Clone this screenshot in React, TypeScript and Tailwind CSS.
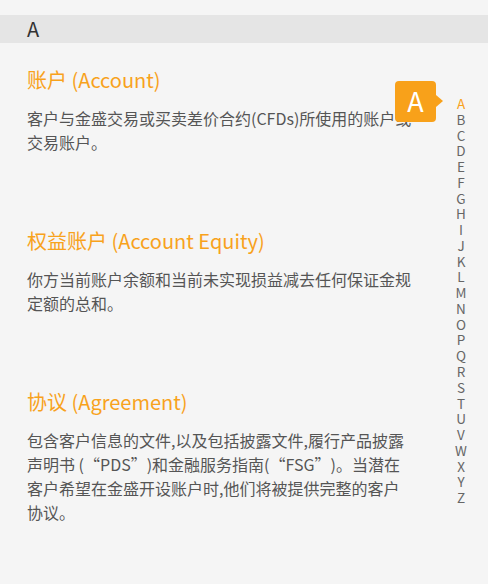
import React from 'react';

const letters = 'ABCDEFGHIJKLMNOPQRSTUVWXYZ'.split('');

// full-width style quotes, as the CJK font draws them in the original
const Open = () => <span className="inline-block w-[1em] text-right">“</span>;
const Close = () => <span className="inline-block w-[1em] text-left">”</span>;

const terms: { title: string; lines: React.ReactNode[] }[] = [
  {
    title: '账户 (Account)',
    lines: ['客户与金盛交易或买卖差价合约(CFDs)所使用的账户或', '交易账户。'],
  },
  {
    title: '权益账户 (Account Equity)',
    lines: ['你方当前账户余额和当前未实现损益减去任何保证金规', '定额的总和。'],
  },
  {
    title: '协议 (Agreement)',
    lines: [
      '包含客户信息的文件,以及包括披露文件,履行产品披露',
      <>
        声明书 (<Open />PDS<Close />)和金融服务指南(<Open />FSG<Close />)。当潜在
      </>,
      '客户希望在金盛开设账户时,他们将被提供完整的客户',
      '协议。',
    ],
  },
];

export default function App() {
  return (
    <div
      className="relative h-[584px] w-[488px] overflow-hidden bg-[#f5f5f5] pt-[15px]"
      style={{ fontFamily: '"Noto Sans CJK SC", "Noto Sans", sans-serif' }}
    >
      {/* Group header */}
      <div className="flex h-[28px] items-center bg-[#e5e5e5] pl-[27px] text-[20px] text-[#333]">
        A
      </div>

      {/* Terms */}
      <div className="flex flex-col gap-[73px] pl-[27px] pt-[23px]">
        {terms.map((term) => (
          <div key={term.title}>
            <h3 className="text-[20px] leading-[28px] font-normal text-[#f8a21c]">{term.title}</h3>
            <div className="mt-[12px] flex flex-col whitespace-nowrap text-[16px] leading-[24px] text-[#555]">
              {term.lines.map((line, i) => (
                <span key={i}>{line}</span>
              ))}
            </div>
          </div>
        ))}
      </div>

      {/* Current letter bubble */}
      <div className="absolute left-[395px] top-[81px] flex h-[41px] w-[41px] items-center justify-center rounded-[4px] bg-[#f8a11a] text-[27px] text-white">
        A
        <span className="absolute right-[-7px] top-[14px] h-0 w-0 border-y-[6px] border-l-[7px] border-y-transparent border-l-[#f8a11a]" />
      </div>

      {/* Index bar */}
      <div className="absolute right-[20px] top-[96px] flex w-[14px] flex-col items-center">
        {letters.map((l) => (
          <span
            key={l}
            className={`text-[13.5px] leading-[15.76px] ${l === 'A' ? 'text-[#f8a21c]' : 'text-[#666]'}`}
          >
            {l}
          </span>
        ))}
      </div>
    </div>
  );
}
